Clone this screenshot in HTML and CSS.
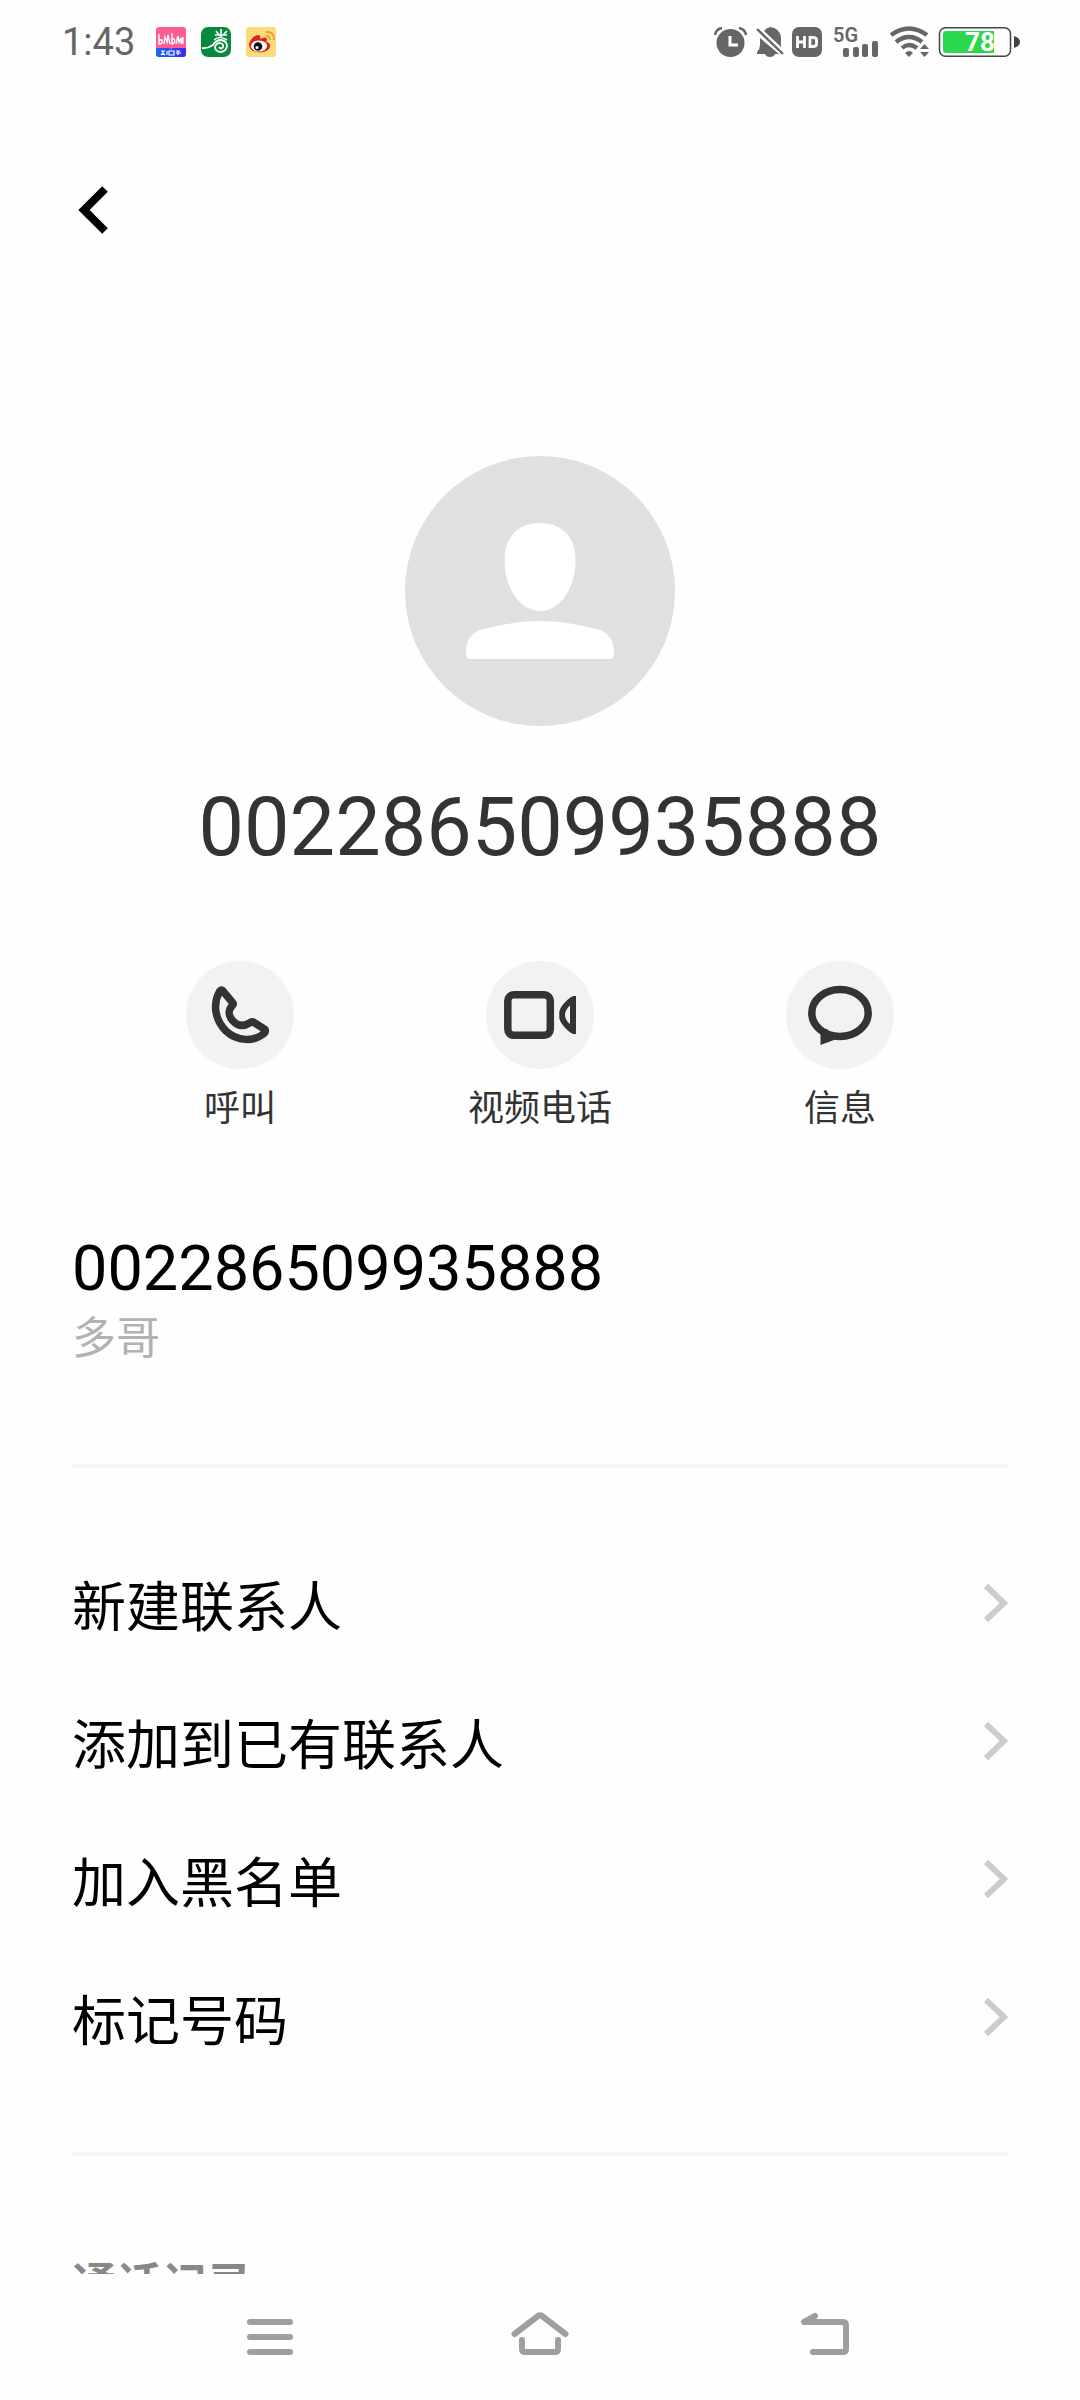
FILE: index.html
```html
<!DOCTYPE html>
<html lang="zh-CN">
<head>
<meta charset="utf-8">
<meta name="viewport" content="width=device-width, initial-scale=1">
<title>联系人详情</title>
<link rel="stylesheet" href="styles.css">
</head>
<body>
<div class="status">
  <div class="status-group">
    <span class="clock">1:43</span>
    <svg class="app-icon" width="30" height="30" viewBox="0 0 30 30" aria-hidden="true">
      <defs><linearGradient id="strip" x1="0" x2="1"><stop offset="0" stop-color="#1668f2"/><stop offset="1" stop-color="#3a2cf0"/></linearGradient></defs>
      <rect width="30" height="30" rx="3" fill="#ff5c92"/>
      <path d="M0 21H30V27Q30 30 27 30H3Q0 30 0 27Z" fill="url(#strip)"/>
      <path d="M3 7V17Q7 17 6 13H3M8 17L9 10L11 15L12 8L14 17M16 6V17Q20 16 18 12H16M20 17L22 9L23 15L25 11V17L27 10V17" fill="none" stroke="#fff" stroke-width="1.4"/>
      <path d="M14 21L15 23L16 21" fill="#ff5c92"/>
      <path d="M5 24H9M7 24V28M5 28L7 26L9 28M11 24V28M13 24H18V28H13ZM20 24H24M20 26H25M22 24V28" fill="none" stroke="#fff" stroke-width="1.2"/>
    </svg>
    <svg class="app-icon" width="30" height="30" viewBox="0 0 30 30" aria-hidden="true">
      <rect width="30" height="30" rx="7" fill="#07893e"/>
      <path d="M20 2V11M15 4L19 9M26 4L21 9M14 8H26M13 13Q19 8 26 13" fill="none" stroke="#fff" stroke-width="1.6"/>
      <path d="M1 21Q6 22 12 18Q15 13 20 13Q26 14 26 19Q25 25 19 25Q14 24 14 20Q15 16 19 16Q23 17 22 20Q20 23 18 20" fill="none" stroke="#fff" stroke-width="1.8"/>
    </svg>
    <svg class="app-icon" width="30" height="30" viewBox="0 0 30 30" aria-hidden="true">
      <rect width="30" height="30" rx="3" fill="#fbdc7c"/>
      <path d="M3 18C3 13 10 7 13 8Q15 9 14 12Q20 9 21 12Q21 14 20 15Q25 16 24 20C22 27 4 28 3 18Z" fill="#e0201b"/>
      <ellipse cx="13" cy="19" rx="8" ry="5.6" fill="#fff"/>
      <circle cx="12" cy="19.500" r="4.300" fill="#111"/>
      <circle cx="11" cy="20.500" r="1.500" fill="#fff"/>
      <path d="M20 9Q24 9 24 13M20 5Q28 4 28 13" fill="none" stroke="#f0a030" stroke-width="2"/>
    </svg>
  </div>
  <svg class="indicators" width="306" height="42" viewBox="0 -6 306 42" role="img" aria-label="闹钟 静音 HD 5G WLAN 78%">
    <g fill="#666">
      <circle cx="16.500" cy="16" r="14"/>
      <path d="M1 8Q2 2 8 1M25 1Q31 2 32 8" fill="none" stroke="#666" stroke-width="2.500"/>
      <path d="M16 9V18H24" fill="none" stroke="#fff" stroke-width="3"/>
      <path d="M46 11L65 27H61Q60 30 56 30Q52 30 51 27H43V25Q46 22 46 18ZM50 4Q52 1 56 0Q66 1 67 11V20Z"/>
      <path d="M43 2L69 27" stroke="#666" stroke-width="2.400"/>
      <rect x="78" width="30" height="30" rx="7"/>
      <path d="M83.500 9V21M90.500 9V21M83.500 15H90.500M96 10.500V19.500H99Q102.500 19.500 102.500 17V13Q102.500 10.500 99 10.500Z" fill="none" stroke="#fff" stroke-width="2.800"/>
      <text class="network" x="119" y="15">5G</text>
      <rect x="129" y="21" width="6" height="9" rx="2"/>
      <rect x="139" y="20" width="6" height="10" rx="2"/>
      <rect x="148" y="17" width="6" height="13" rx="2"/>
      <rect x="158" y="14" width="6" height="16" rx="2"/>
      <path d="M177 8Q195 -5 213 8M182 15Q195 5 208 15M188 21Q195 15 203 21" fill="none" stroke="#666" stroke-width="4.200"/>
      <path d="M191 26Q195 22 199 26L195 30ZM206 22L210.500 17L215 22ZM206 25H215L210.500 30Z"/>
    </g>
    <rect x="225.500" y="0.800" width="71" height="28.400" rx="6" fill="#fff" stroke="#444" stroke-width="1.500"/>
    <path d="M232 4H280V26H232Q229 26 229 23V7Q229 4 232 4Z" fill="#2bd84b"/>
    <path d="M300 9Q306 11 306 15T300 21Z" fill="#444"/>
    <text class="charge" x="251" y="24">78</text>
  </svg>
</div>

<main class="page">
  <header class="topbar">
    <button class="back" type="button" aria-label="返回">
      <svg width="36" height="48" viewBox="0 0 36 48"><path d="M30 3L9 24L30 45" fill="none" stroke="#000" stroke-width="8"/></svg>
    </button>
  </header>

  <section class="profile">
    <svg class="avatar" width="270" height="270" viewBox="0 0 270 270" aria-hidden="true">
      <circle cx="135" cy="135" r="135" fill="#e0e0e0"/>
      <path fill="#fff" d="M135 67C158 67 170.500 82 170.500 104C170.500 131 156 155 135 155C114 155 99.500 131 99.500 104C99.500 82 112 67 135 67Z"/>
      <path fill="#fff" d="M61 198C61 183 67 175 82 172C102 168 115 165 135 165S168 168 188 172C203 175 209 183 209 198Q209 203 204 203H66Q61 203 61 198Z"/>
    </svg>
    <h1 class="title">002286509935888</h1>
  </section>

  <div class="actions">
    <button class="action" type="button">
      <svg class="disc" width="108" height="108" viewBox="0 0 108 108" aria-hidden="true">
        <path fill="none" stroke="#333" stroke-width="7.500" stroke-linejoin="round" d="M36.500 29.500L46.500 41.500Q48 43 46 45C42 49 42.500 55 46.500 59.500C52 65.500 58 65.500 63.500 62Q66 60 68 61.500L79 68.500Q80 70.500 78 72.500C68 81 51 80.500 40 70C29 59 26.500 43.500 33.500 30.500Q35 28 36.500 29.500Z"/>
      </svg>
      <span class="action-label">呼叫</span>
    </button>
    <button class="action" type="button">
      <svg class="disc" width="108" height="108" viewBox="0 0 108 108" aria-hidden="true">
        <rect x="21.800" y="33.800" width="42.500" height="40.500" rx="6" fill="none" stroke="#333" stroke-width="7.500"/>
        <path fill="#333" fill-rule="evenodd" d="M90 35H88C84 35 73.300 46 73.300 51.500V56.500C73.300 62 84 73 88 73H90ZM84 44.500V63C80 60 79 56 79 54S80 48 84 44.500Z"/>
      </svg>
      <span class="action-label">视频电话</span>
    </button>
    <button class="action" type="button">
      <svg class="disc" width="108" height="108" viewBox="0 0 108 108" aria-hidden="true">
        <ellipse cx="54" cy="52" rx="28.200" ry="23.400" fill="none" stroke="#333" stroke-width="7.500"/>
        <path fill="#333" d="M34.500 68L41.500 68L41.500 73L48 72V79L34.500 84Z"/>
      </svg>
      <span class="action-label">信息</span>
    </button>
  </div>

  <section class="phone">
    <p class="phone-number">002286509935888</p>
    <p class="phone-place">多哥</p>
  </section>

  <ul class="menu">
    <li><a class="row" href="#new">新建联系人<svg width="24" height="42" viewBox="0 0 24 42" aria-hidden="true"><path d="M2 4L20 21L2 38"/></svg></a></li>
    <li><a class="row" href="#add">添加到已有联系人<svg width="24" height="42" viewBox="0 0 24 42" aria-hidden="true"><path d="M2 4L20 21L2 38"/></svg></a></li>
    <li><a class="row" href="#block">加入黑名单<svg width="24" height="42" viewBox="0 0 24 42" aria-hidden="true"><path d="M2 4L20 21L2 38"/></svg></a></li>
    <li><a class="row" href="#mark">标记号码<svg width="24" height="42" viewBox="0 0 24 42" aria-hidden="true"><path d="M2 4L20 21L2 38"/></svg></a></li>
  </ul>

  <h2 class="log-title">通话记录</h2>
</main>

<nav class="navbar">
  <button class="nav-button" type="button" aria-label="最近任务">
    <svg width="60" height="60" viewBox="0 0 60 60"><path d="M10 15H50M10 30H50M10 45H50"/></svg>
  </button>
  <button class="nav-button" type="button" aria-label="主屏幕">
    <svg width="60" height="60" viewBox="0 0 60 60"><path d="M4.500 27L28 9Q30 7.500 32 9L55.500 27M12 33V42Q12 45 15 45H45Q48 45 48 42V33"/></svg>
  </button>
  <button class="nav-button" type="button" aria-label="返回上一级">
    <svg width="90" height="60" viewBox="0 0 90 60"><path d="M50 9L39 15H78Q81 15 81 18V42Q81 45 78 45H48"/></svg>
  </button>
</nav>
</body>
</html>
```
FILE: styles.css
```css
* {
  box-sizing: border-box;
}

body {
  margin: 0;
  height: 100vh;
  display: flex;
  flex-direction: column;
  background: #fefefe;
  color: #000;
  font-family: "Noto Sans CJK SC", sans-serif;
}

button {
  padding: 0;
  border: 0;
  background: none;
  color: inherit;
  font: inherit;
}

h1, h2, p, ul {
  margin: 0;
  padding: 0;
  font-weight: 400;
  list-style: none;
}

svg {
  display: block;
  flex: none;
}

/* Status bar */
.status {
  flex: none;
  height: 84px;
  padding: 0 60px 0 62px;
  display: flex;
  align-items: center;
  justify-content: space-between;
}

.status-group {
  display: flex;
  align-items: center;
  gap: 15px;
}

.clock {
  width: 79px;
  color: #666;
  font: 38px/48px Roboto, sans-serif;
}

.network {
  font: 600 20px Roboto, sans-serif;
}

.charge {
  fill: #fff;
  font: 700 26px Roboto, sans-serif;
}

/* Scrolling page */
.page {
  flex: 1;
  min-height: 0;
  overflow-y: auto;
  scrollbar-width: none;
}

.topbar {
  display: flex;
  padding: 102px 75px 0;
}

.profile {
  padding-top: 222px;
  display: flex;
  flex-direction: column;
  align-items: center;
  gap: 54px;
}

.title {
  color: #333;
  font: 81px/96px Roboto, sans-serif;
}

.actions {
  padding: 85px 90px 104px;
  display: grid;
  grid-template-columns: repeat(3, 1fr);
}

.action {
  display: flex;
  flex-direction: column;
  align-items: center;
  gap: 12px;
  color: #333;
}

.disc {
  border-radius: 50%;
  background: #f2f2f2;
}

.action-label {
  font-size: 36px;
  line-height: 48px;
}

.phone {
  margin: 0 72px;
  padding-bottom: 99px;
  border-bottom: 4px solid #f5f5f5;
}

.phone-number {
  font: 63px/72px Roboto, sans-serif;
}

.phone-place {
  color: #b2b2b2;
  font-size: 44px;
  line-height: 60px;
}

.menu {
  margin: 0 72px;
  padding: 66px 0;
  border-bottom: 4px solid #f5f5f5;
}

.row {
  height: 138px;
  display: flex;
  align-items: center;
  justify-content: space-between;
  color: inherit;
  font-size: 54px;
  text-decoration: none;
}

.row path {
  fill: none;
  stroke: #ccc;
  stroke-width: 6px;
}

.log-title {
  padding: 96px 72px;
  color: #888;
  font-size: 45px;
  font-weight: 700;
  line-height: 60px;
}

/* System navigation */
.navbar {
  flex: none;
  height: 126px;
  padding: 0 135px;
  display: grid;
  grid-template-columns: repeat(3, 1fr);
}

.nav-button {
  display: grid;
  place-items: center;
}

.nav-button path {
  fill: none;
  stroke: #9f9f9f;
  stroke-width: 6px;
  stroke-linecap: round;
  stroke-linejoin: round;
}
```
